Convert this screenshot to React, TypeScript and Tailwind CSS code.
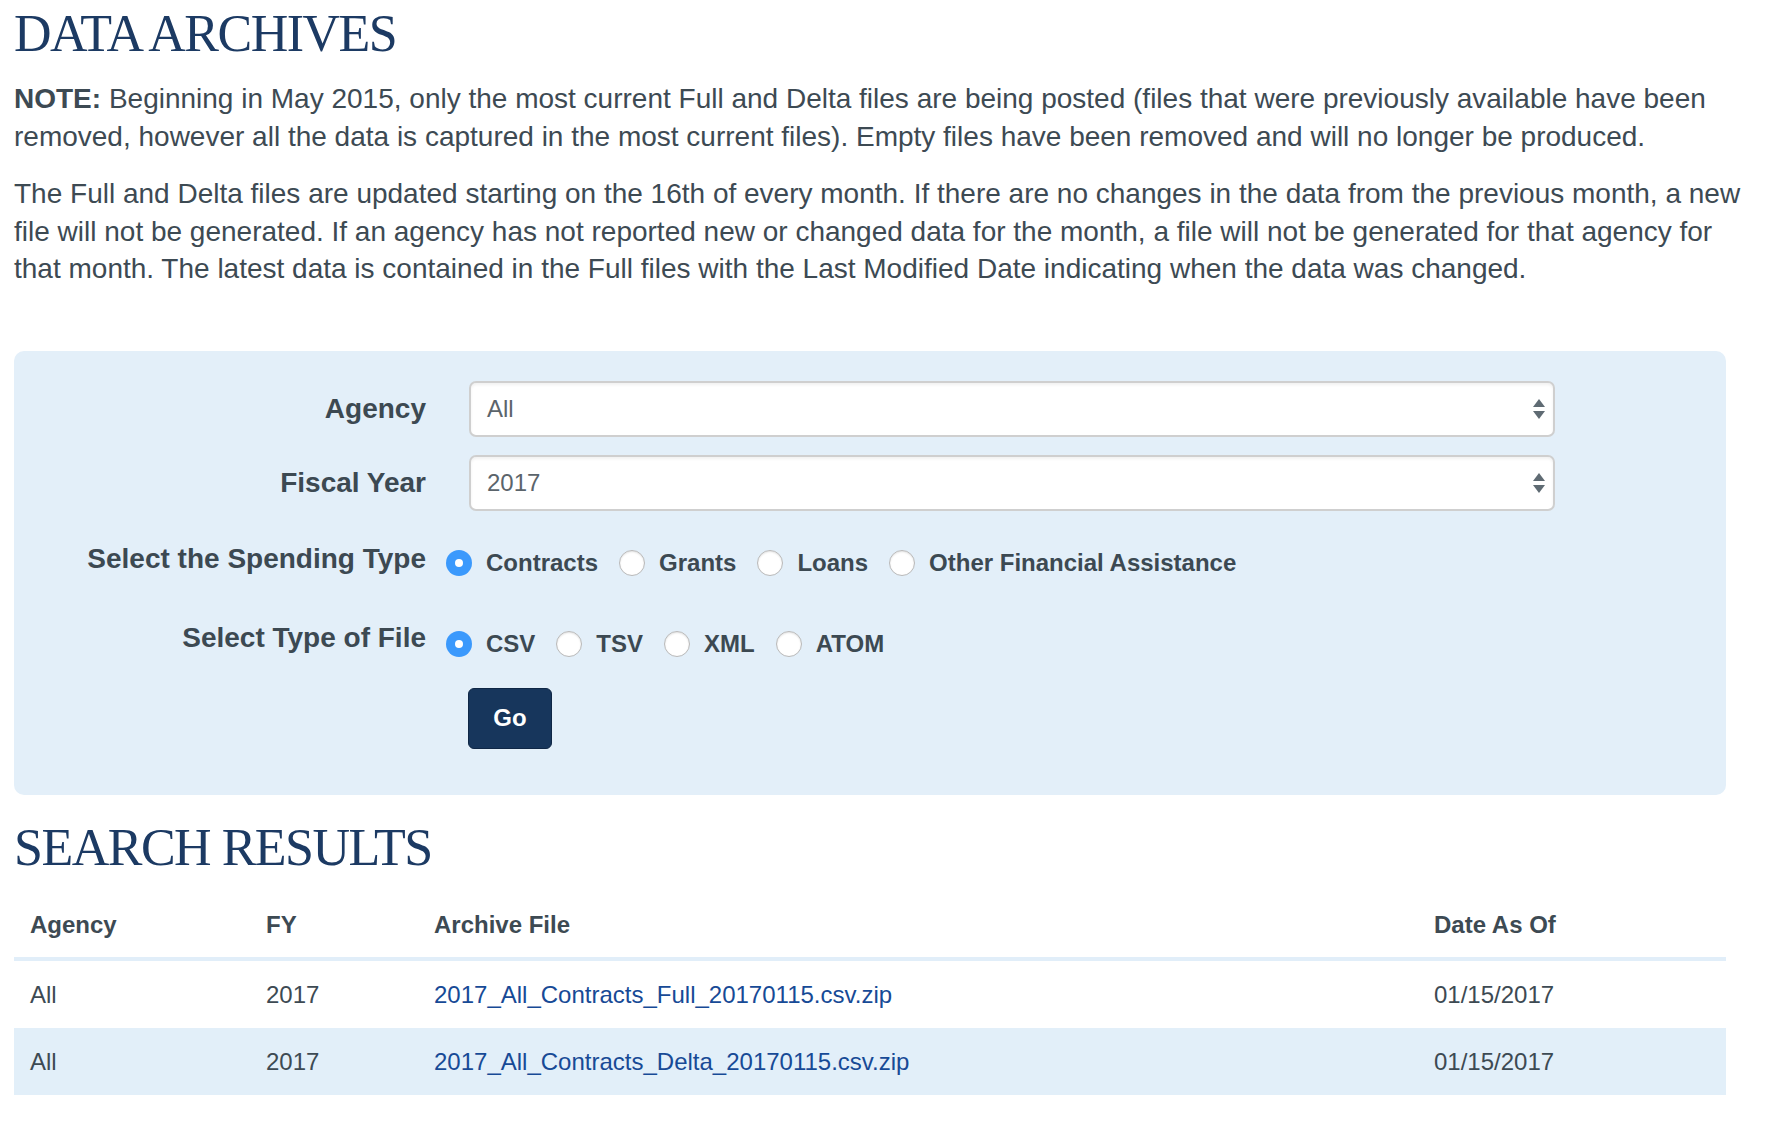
import React from 'react';

const sans = { fontFamily: '"Liberation Sans", Arial, sans-serif' };
const serif = { fontFamily: '"Liberation Serif", "Times New Roman", serif' };

const Radio = ({ checked, label }: { checked?: boolean; label: string }) => (
  <label className="flex items-center mr-[21px]">
    {checked ? (
      <span className="w-[26px] h-[26px] rounded-full bg-[#3b99fc] flex items-center justify-center">
        <span className="w-[8px] h-[8px] rounded-full bg-white" />
      </span>
    ) : (
      <span className="w-[26px] h-[26px] rounded-full bg-white border border-[#b9b9b9] shadow-[inset_0_1px_2px_rgba(0,0,0,0.12)]" />
    )}
    <span className="ml-[14px] text-[24px] font-bold leading-[40px] text-[#3c4952]">{label}</span>
  </label>
);

const FakeSelect = ({ value }: { value: string }) => (
  <div className="w-[1086px] h-[56px] bg-white border-2 border-[#cfcfcf] rounded-[7px] shadow-[inset_0_2px_3px_rgba(0,0,0,0.06)] flex items-center justify-between pl-[16px] pr-[7px]">
    <span className="text-[24px] text-[#5b646b]">{value}</span>
    <svg width="14" height="26" viewBox="0 0 14 26">
      <path d="M7 3 L13 11 L1 11 Z" fill="#5f6b73" />
      <path d="M1 15 L13 15 L7 23 Z" fill="#5f6b73" />
    </svg>
  </div>
);

const rows = [
  { agency: 'All', fy: '2017', file: '2017_All_Contracts_Full_20170115.csv.zip', date: '01/15/2017' },
  { agency: 'All', fy: '2017', file: '2017_All_Contracts_Delta_20170115.csv.zip', date: '01/15/2017' },
];

const App = () => {
  return (
    <div className="min-h-screen bg-white px-[14px] pt-[5px] text-[#3d4a53]" style={sans}>
      {/* Data archives */}
      <h1 className="text-[52px] leading-[57px] tracking-[-1.5px] text-[#1c3a63]" style={serif}>
        DATA ARCHIVES
      </h1>
      <div className="w-[1752px]">
        <p className="mt-[18px] text-[28px] leading-[37.5px]">
          <b>NOTE:</b> Beginning in May 2015, only the most current Full and Delta files are being posted (files that were previously available have been removed, however all the data is captured in the most current files). Empty files have been removed and will no longer be produced.
        </p>
        <p className="mt-[20px] text-[28px] leading-[37.5px]">
          The Full and Delta files are updated starting on the 16th of every month. If there are no changes in the data from the previous month, a new file will not be generated. If an agency has not reported new or changed data for the month, a file will not be generated for that agency for that month. The latest data is contained in the Full files with the Last Modified Date indicating when the data was changed.
        </p>
      </div>

      {/* Filter panel */}
      <div className="mt-[63px] w-[1712px] bg-[#e3eff9] rounded-[10px] pt-[30px] pb-[46px]">
        <div className="flex items-center">
          <div className="w-[412px] text-right text-[28px] font-bold text-[#3c4952]">Agency</div>
          <div className="ml-[43px]">
            <FakeSelect value="All" />
          </div>
        </div>
        <div className="flex items-center mt-[18px]">
          <div className="w-[412px] text-right text-[28px] font-bold text-[#3c4952]">Fiscal Year</div>
          <div className="ml-[43px]">
            <FakeSelect value="2017" />
          </div>
        </div>
        <div className="flex mt-[28px]">
          <div className="w-[412px] text-right text-[28px] leading-[40px] font-bold text-[#3c4952]">Select the Spending Type</div>
          <div className="ml-[20px] pt-[4px] flex items-center">
            <Radio checked label="Contracts" />
            <Radio label="Grants" />
            <Radio label="Loans" />
            <Radio label="Other Financial Assistance" />
          </div>
        </div>
        <div className="flex mt-[35px]">
          <div className="w-[412px] text-right text-[28px] leading-[40px] font-bold text-[#3c4952]">Select Type of File</div>
          <div className="ml-[20px] pt-[6px] flex items-center">
            <Radio checked label="CSV" />
            <Radio label="TSV" />
            <Radio label="XML" />
            <Radio label="ATOM" />
          </div>
        </div>
        <div className="ml-[454px] mt-[24px]">
          <button className="w-[84px] h-[61px] bg-[#17365c] border border-[#0f2746] rounded-[6px] text-white text-[24px] font-bold">
            Go
          </button>
        </div>
      </div>

      {/* Search results */}
      <h2 className="mt-[24px] text-[52px] leading-[57px] tracking-[-1.5px] text-[#1c3a63]" style={serif}>
        SEARCH RESULTS
      </h2>
      <table className="mt-[16px] w-[1712px] text-[24px] leading-[27px] text-left">
        <thead>
          <tr className="border-b-4 border-[#e1eef9]">
            <th className="w-[236px] pl-[16px] py-[19px] font-bold">Agency</th>
            <th className="w-[168px] pl-[16px] py-[19px] font-bold">FY</th>
            <th className="w-[1000px] pl-[16px] py-[19px] font-bold">Archive File</th>
            <th className="pl-[16px] py-[19px] font-bold">Date As Of</th>
          </tr>
        </thead>
        <tbody>
          {rows.map((r, i) => (
            <tr key={i} className={i % 2 === 1 ? 'bg-[#e2eff9]' : ''}>
              <td className="pl-[16px] py-[20px]">{r.agency}</td>
              <td className="pl-[16px] py-[20px]">{r.fy}</td>
              <td className="pl-[16px] py-[20px]">
                <a href="#" className="text-[#174a96]">{r.file}</a>
              </td>
              <td className="pl-[16px] py-[20px]">{r.date}</td>
            </tr>
          ))}
        </tbody>
      </table>
    </div>
  );
};

export default App;
